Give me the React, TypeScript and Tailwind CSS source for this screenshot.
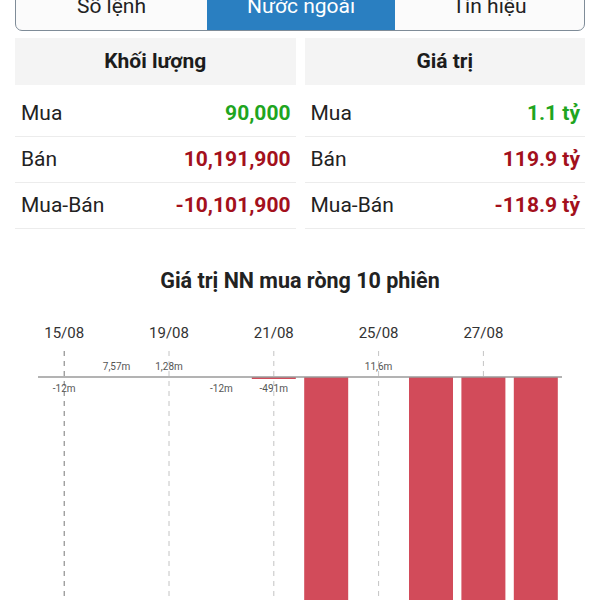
import React from "react";

const tabs = [
  { label: "Sổ lệnh", w: "w-[191px]", active: false },
  { label: "Nước ngoài", w: "w-[188px]", active: true },
  { label: "Tín hiệu", w: "flex-1", active: false },
];

type Row = { label: string; value: string; tone: "up" | "down" };

const volume: Row[] = [
  { label: "Mua", value: "90,000", tone: "up" },
  { label: "Bán", value: "10,191,900", tone: "down" },
  { label: "Mua-Bán", value: "-10,101,900", tone: "down" },
];

const amount: Row[] = [
  { label: "Mua", value: "1.1 tỷ", tone: "up" },
  { label: "Bán", value: "119.9 tỷ", tone: "down" },
  { label: "Mua-Bán", value: "-118.9 tỷ", tone: "down" },
];

// 10 sessions, value in "m"; big negatives run off the bottom of the screen
const sessions = [
  { date: "15/08", label: "-12m", h: 0 },
  { date: "", label: "7,57m", h: 0 },
  { date: "19/08", label: "1,28m", h: 0 },
  { date: "", label: "-12m", h: 0 },
  { date: "21/08", label: "-491m", h: 2 },
  { date: "", label: "", h: 400 },
  { date: "25/08", label: "11,6m", h: 0 },
  { date: "", label: "", h: 400 },
  { date: "27/08", label: "", h: 400 },
  { date: "", label: "", h: 400 },
];

function StatTable({ title, rows }: { title: string; rows: Row[] }) {
  return (
    <div className="flex-1 flex flex-col">
      <div className="h-[47px] bg-[#f4f4f4] flex items-center justify-center text-[21px] font-bold text-[#1c1c1c]">
        {title}
      </div>
      <div className="mt-[6px] flex flex-col">
        {rows.map((r) => (
          <div
            key={r.label}
            className="h-[46px] flex items-center justify-between pl-[6px] pr-[5px] border-b border-[#ececec]"
          >
            <span className="text-[21px] text-[#222]">{r.label}</span>
            <span
              className={
                "text-[21px] font-bold " +
                (r.tone === "up" ? "text-[#1fa51f]" : "text-[#a3101c]")
              }
            >
              {r.value}
            </span>
          </div>
        ))}
      </div>
    </div>
  );
}

function NetChart() {
  const left = 38;
  const step = 52.4;
  const axisY = 66;
  return (
    <svg width="600" height="290" className="block">
      {sessions.map((s, i) => {
        const cx = left + step * i + step / 2;
        return (
          <g key={i}>
            {s.date && (
              <>
                <text
                  x={cx}
                  y={27}
                  textAnchor="middle"
                  fontSize="15"
                  fill="#333"
                  fontFamily="Roboto, sans-serif"
                >
                  {s.date}
                </text>
                <line
                  x1={cx}
                  y1={40}
                  x2={cx}
                  y2={290}
                  stroke={i === 0 ? "#777" : "#c4c4c4"}
                  strokeWidth="1"
                  strokeDasharray="5 5"
                />
              </>
            )}
            {s.h > 0 && (
              <rect x={left + step * i + 4.2} y={axisY} width={44} height={s.h} fill="#d24b5a" />
            )}
          </g>
        );
      })}
      <line x1={left} y1={axisY} x2={562} y2={axisY} stroke="#9a9a9a" strokeWidth="1.5" />
      {sessions.map((s, i) => {
        if (!s.label) return null;
        const cx = left + step * i + step / 2;
        const neg = s.label.startsWith("-");
        return (
          <text
            key={"l" + i}
            x={cx}
            y={neg ? 81 : 59}
            textAnchor="middle"
            fontSize="10"
            fill="#555"
            fontFamily="Roboto, sans-serif"
          >
            {s.label}
          </text>
        );
      })}
    </svg>
  );
}

export default function App() {
  return (
    <div className="w-[600px] h-[600px] overflow-hidden bg-white font-['Roboto',sans-serif]">
      {/* Tabs */}
      <div className="mx-[15px] -mt-[17px] h-[48px] flex border border-[#7f8c98] rounded-b-[7px] overflow-hidden bg-[#fbfbfb]">
        {tabs.map((t) => (
          <div
            key={t.label}
            className={
              t.w +
              " flex items-center justify-center text-[21px] " +
              (t.active ? "bg-[#2a7fc1] text-white" : "text-[#222]")
            }
          >
            {t.label}
          </div>
        ))}
      </div>

      {/* Summary tables */}
      <div className="mt-[7px] mx-[15px] flex gap-[9px]">
        <StatTable title="Khối lượng" rows={volume} />
        <StatTable title="Giá trị" rows={amount} />
      </div>

      {/* Chart */}
      <div className="mt-[37px] text-center text-[21.5px] leading-[30px] font-bold text-[#222]">
        Giá trị NN mua ròng 10 phiên
      </div>
      <div className="mt-[15px]">
        <NetChart />
      </div>
    </div>
  );
}
